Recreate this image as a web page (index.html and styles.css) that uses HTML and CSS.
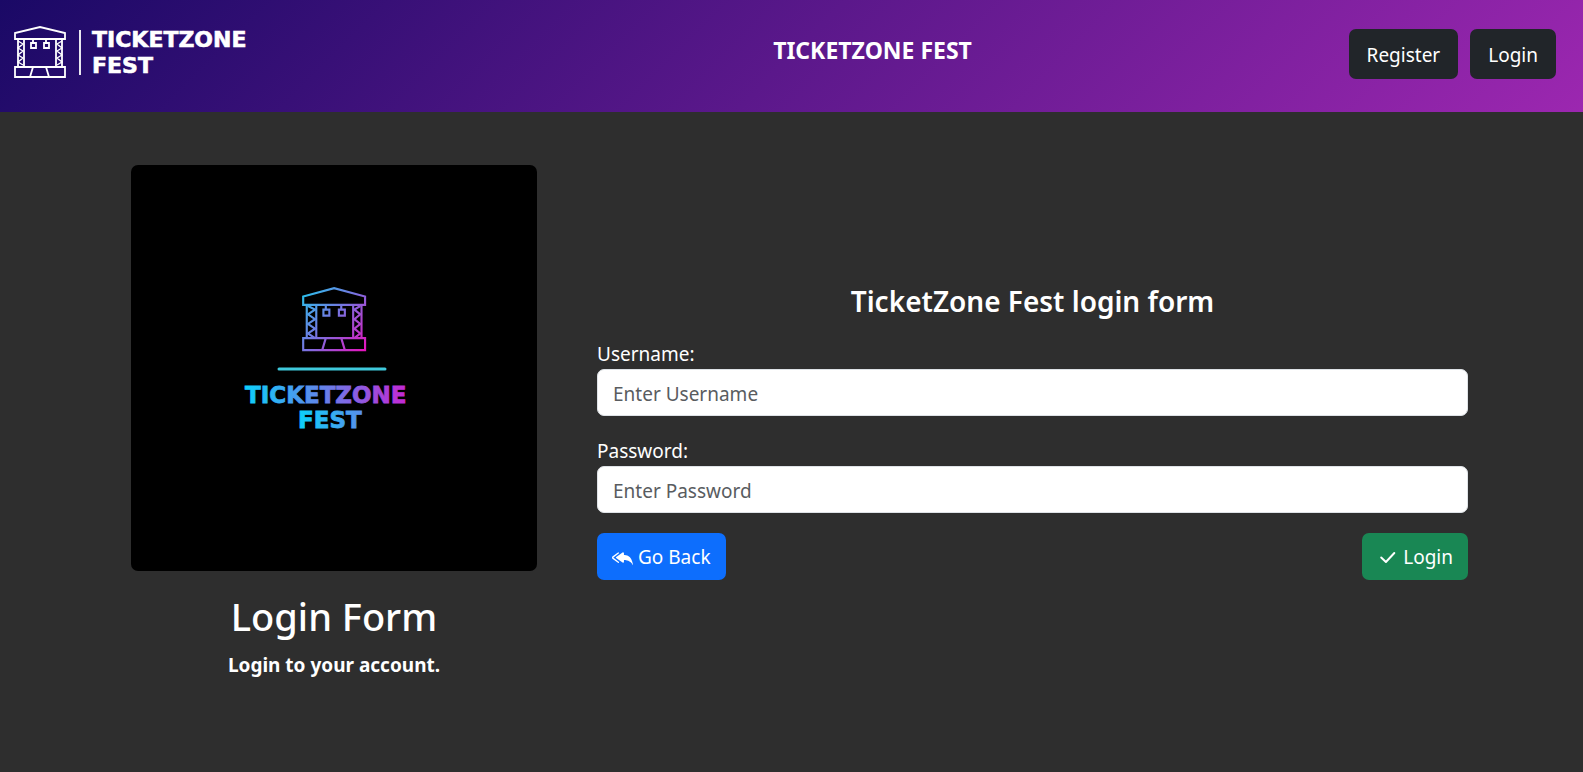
FILE: index.html
```html
<!DOCTYPE html>
<html lang="en">
<head>
<meta charset="utf-8">
<title>TicketZone Fest</title>
<link rel="stylesheet" href="styles.css">
</head>
<body>
<header class="topbar">
  <a class="brand" href="#" aria-label="TicketZone Fest home">
    <svg class="brand-logo" viewBox="0 0 240 60" fill="none" stroke="#fff" stroke-width="1.8">
      <path d="M2 14V8L27 2l25 6v6zM2 42h50v10H2zM20 42l-3 10M33 42l3 10"/>
      <path d="M5 14v28M11 14v28M43 14v28M49 14v28"/>
      <path d="M5 16l5 3-5 4 5 3-5 4 5 3-5 4 5 3M49 16l-5 3 5 4-5 3 5 4-5 3 5 4-5 3" stroke-width="1.4"/>
      <path d="M20 14v4M33 14v4M18 18h5v5h-5zM31 18h5v5h-5z"/>
      <path d="M67 5v45"/>
      <g class="logo-text" fill="#fff" stroke-width=".6">
        <text x="79" y="22">TICKETZONE</text>
        <text x="79" y="48">FEST</text>
      </g>
    </svg>
  </a>
  <h1 class="topbar-title">TICKETZONE FEST</h1>
  <nav class="topbar-nav">
    <a class="btn btn-dark" href="#">Register</a>
    <a class="btn btn-dark" href="#">Login</a>
  </nav>
</header>
<main class="page">
  <section class="intro">
    <svg class="poster" viewBox="0 0 406 406" fill="none" role="img" aria-label="TicketZone Fest">
      <defs>
        <linearGradient id="stageFill" gradientUnits="userSpaceOnUse" x1="0" y1="4" x2="54" y2="52"><stop stop-color="#27c4ec"/><stop offset=".5" stop-color="#7d6fe0"/><stop offset="1" stop-color="#e613bd"/></linearGradient>
        <linearGradient id="textFill" gradientUnits="userSpaceOnUse" x1="112" y1="0" x2="283" y2="0"><stop stop-color="#0bd2fa"/><stop offset=".5" stop-color="#6b7ce8"/><stop offset="1" stop-color="#cc20d2"/></linearGradient>
        <linearGradient id="festFill" gradientUnits="userSpaceOnUse" x1="167" y1="0" x2="233" y2="0"><stop stop-color="#0bd2fa"/><stop offset="1" stop-color="#5c8cec"/></linearGradient>
      </defs>
      <rect width="406" height="406" fill="#000"/>
      <g transform="translate(171 122) scale(1.19)" stroke="url(#stageFill)" stroke-width="1.8">
        <path d="M1 15V8L27 1l26 7v7zM1 43h52v10H1zM20 43l-3 10M33 43l3 10"/>
        <path d="M4 15v28M12 15v28M43 15v28M50 15v28"/>
        <path d="M5 16l6 3-6 4 6 4-6 4 6 4-6 4 6 4M49 16l-5 3 5 4-5 4 5 4-5 4 5 4-5 4"/>
        <path d="M20 15v4M33 15v4M18 19h5v5h-5zM31 19h5v5h-5z"/>
      </g>
      <path d="M148 204h106" stroke="#3fc9dc" stroke-width="3" stroke-linecap="round"/>
      <g class="poster-text" stroke-width=".8">
        <text x="114" y="238" fill="url(#textFill)" stroke="url(#textFill)">TICKETZONE</text>
        <text x="167" y="263" fill="url(#festFill)" stroke="url(#festFill)">FEST</text>
      </g>
    </svg>
    <h2 class="intro-title">Login Form</h2>
    <p class="intro-text">Login to your account.</p>
  </section>
  <form class="login">
    <h3 class="login-title">TicketZone Fest login form</h3>
    <div class="field">
      <label for="username">Username:</label>
      <input id="username" type="text" placeholder="Enter Username">
    </div>
    <div class="field">
      <label for="password">Password:</label>
      <input id="password" type="password" placeholder="Enter Password">
    </div>
    <div class="actions">
      <button class="btn btn-primary" type="button">
        <svg class="icon" viewBox="0 0 16 16" fill="currentColor"><path d="M8.021 11.9 3.453 8.62a.719.719 0 0 1 0-1.238L8.021 4.1a.716.716 0 0 1 1.079.619V6c1.5 0 6 0 7 8-2.5-4.5-7-4-7-4v1.281c0 .56-.606.898-1.079.62z"/><path d="M5.232 4.293a.5.5 0 0 1-.106.7L1.114 7.945l-.042.028a.147.147 0 0 0 0 .252l.042.028 4.012 2.954a.5.5 0 1 1-.593.805L.539 9.073a1.147 1.147 0 0 1 0-1.946l3.994-2.94a.5.5 0 0 1 .699.106z"/></svg>
        Go Back
      </button>
      <button class="btn btn-success" type="submit">
        <svg class="icon" viewBox="0 0 16 16" fill="none" stroke="currentColor" stroke-width="1.5" stroke-linecap="round" stroke-linejoin="round"><path d="M3.2 8 6.8 11.4 13.2 4.6"/></svg>
        Login
      </button>
    </div>
  </form>
</main>
</body>
</html>
```
FILE: styles.css
```css
* { box-sizing: border-box; }

body {
  margin: 0;
  background: #2e2e2e;
  color: #fff;
  font: 19px/30px "Segoe UI", "Noto Sans", sans-serif;
}

h1, h2, h3, p { margin: 0; }

.topbar {
  display: grid;
  grid-template-columns: 1fr auto 1fr;
  min-height: 112px;
  padding: 25px 27px 0 13px;
  background: linear-gradient(135deg, #1a0966, #9c27b0);
}

.brand-logo { display: block; width: 240px; height: 60px; }

.logo-text { font: bold 22px "DejaVu Sans", sans-serif; }
.poster-text { font: bold 23px "DejaVu Sans", sans-serif; }

.topbar-title { padding-left: 176px; font-size: 23px; line-height: 50px; }

.topbar-nav {
  display: flex;
  justify-content: flex-end;
  align-items: flex-start;
  gap: 12px;
  padding-top: 4px;
}

.btn {
  display: inline-flex;
  align-items: center;
  gap: 5px;
  padding: 9px 15px 8px;
  border: 0;
  border-radius: 7px;
  color: #fff;
  font: inherit;
  text-decoration: none;
}

.btn-dark { padding: 11px 18px 9px; background: #212529; }
.btn-primary { background: #0d6efd; }
.btn-success { background: #198754; }

.icon { width: 21px; height: 21px; }

.page {
  display: grid;
  grid-template-columns: 406fr 871fr;
  gap: 60px;
  align-items: center;
  padding: 53px 115px 53px 131px;
}

.intro { text-align: center; }

.poster { display: block; width: 100%; border-radius: 7px; }

.intro-title { margin: 20px 0 9px; font-size: 38px; font-weight: 500; line-height: 50px; }

.intro-text { font-weight: 700; }

.login {
  display: flex;
  flex-direction: column;
  gap: 20px;
  padding-top: 18px;
}

.login-title { font-size: 28px; font-weight: 600; line-height: 36px; text-align: center; }

.field { display: flex; flex-direction: column; }

.field input {
  width: 100%;
  height: 47px;
  padding: 9px 15px 7px;
  border: 1px solid #dee2e6;
  border-radius: 7px;
  background: #fff;
  color: #212529;
  font: inherit;
}

.field input::placeholder { color: #595c5f; }

.actions { display: flex; justify-content: space-between; }
```
